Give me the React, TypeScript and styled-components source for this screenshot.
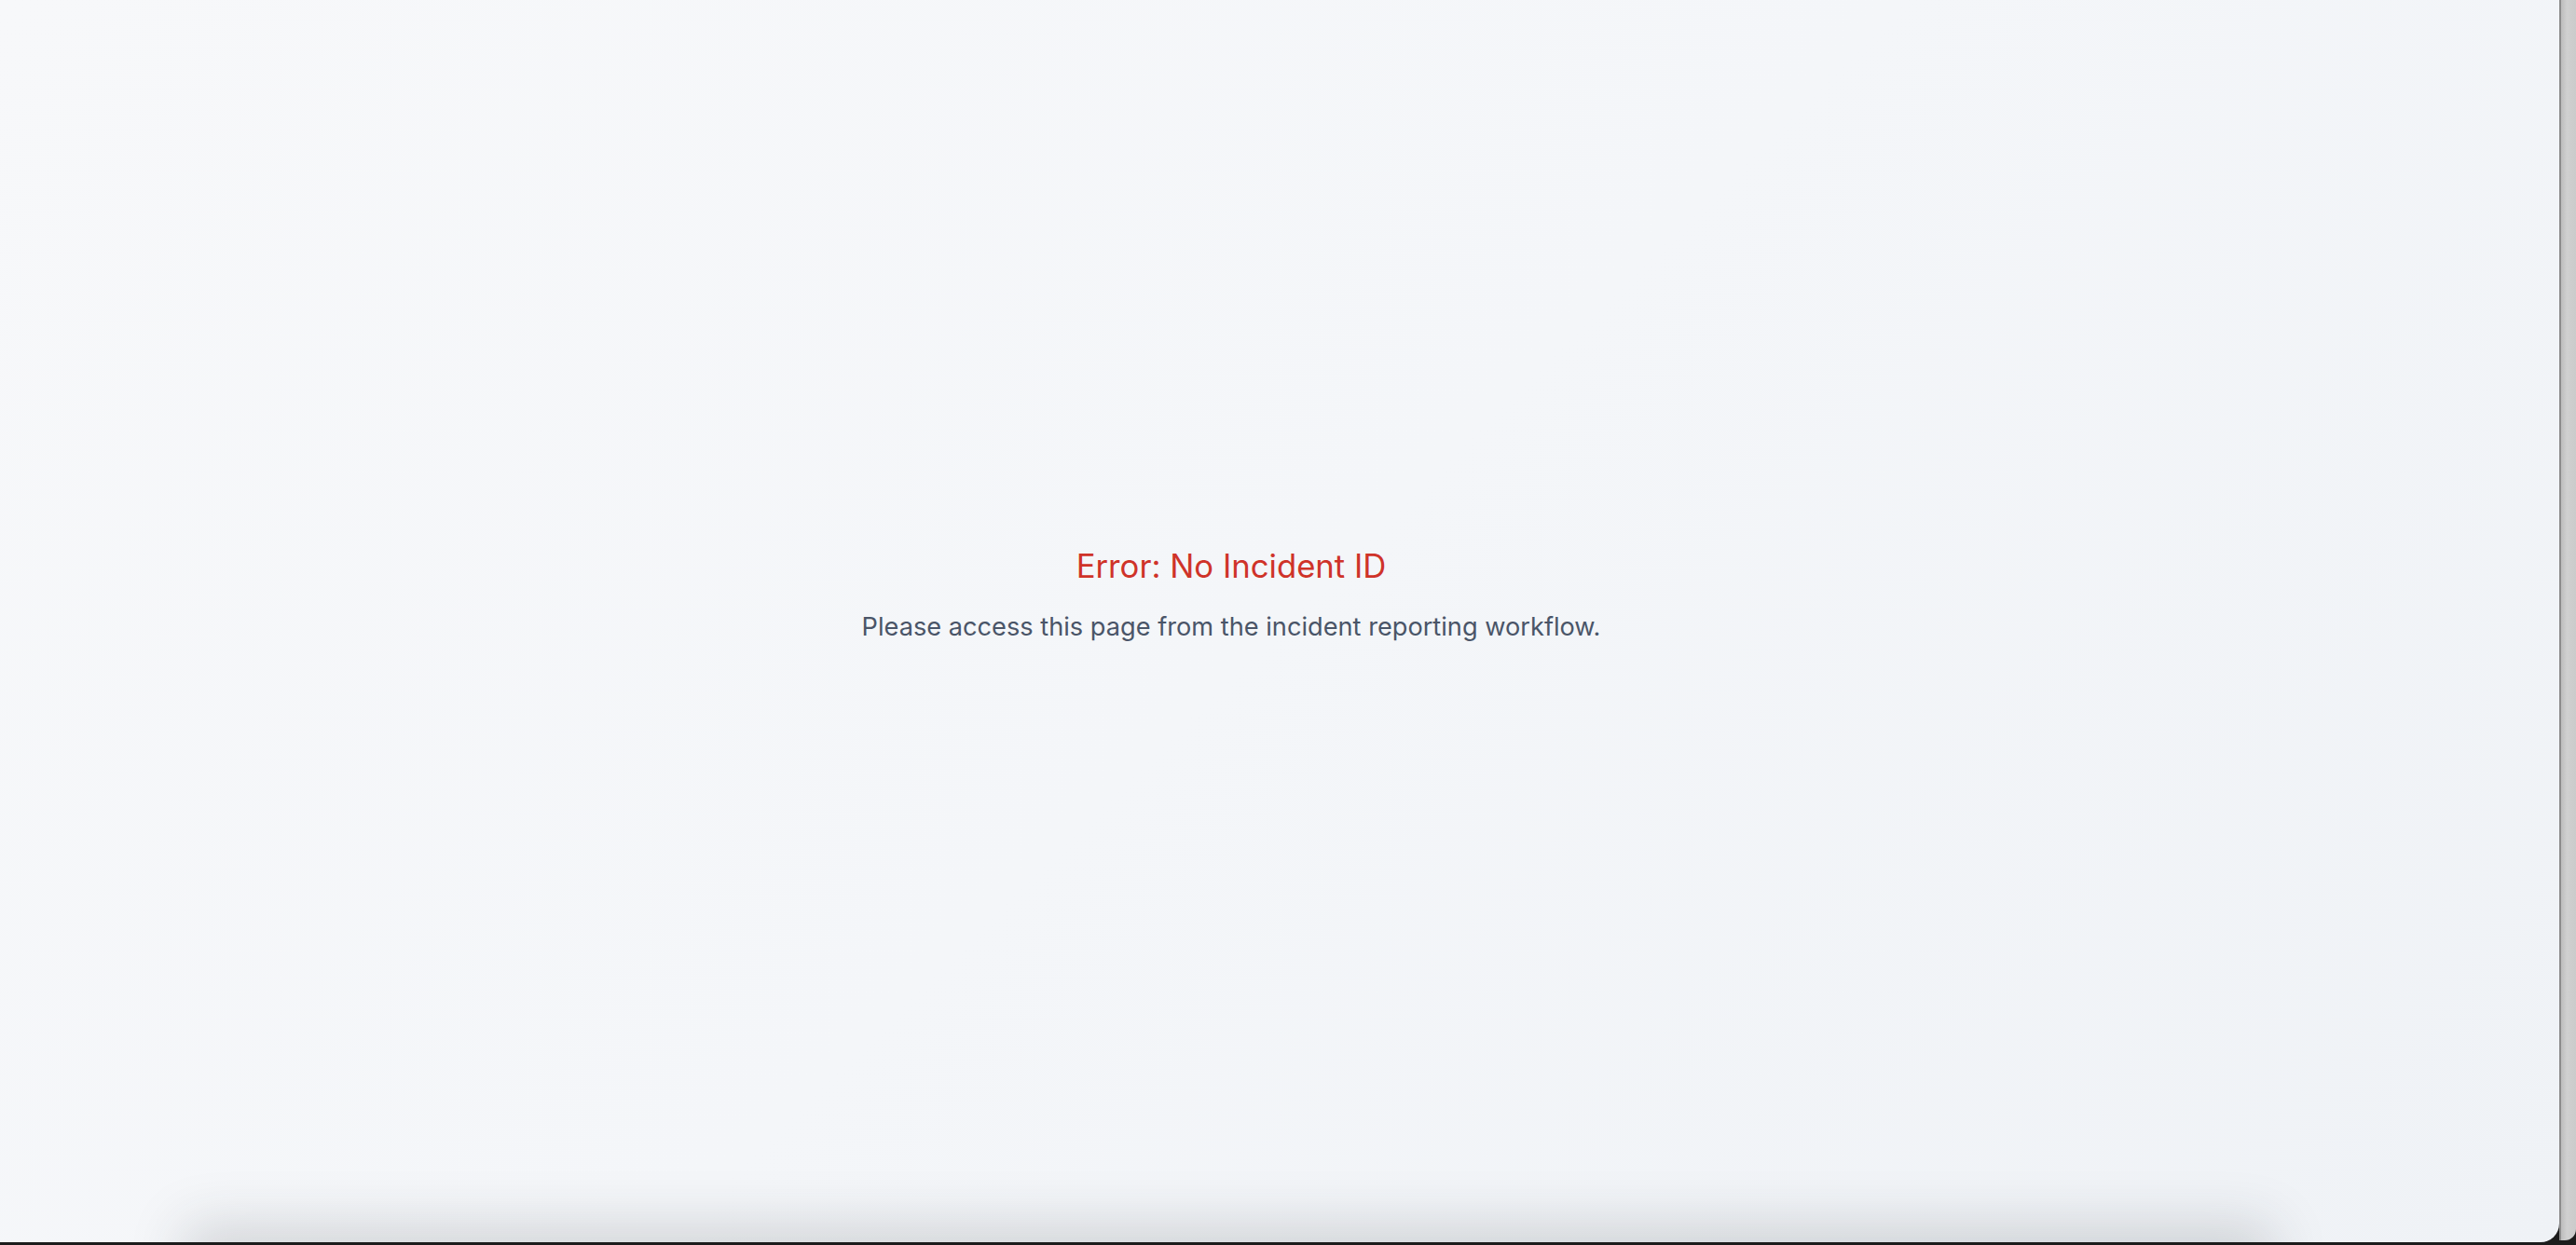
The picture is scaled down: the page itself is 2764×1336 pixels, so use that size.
import React from "react";
import styled, { createGlobalStyle } from "styled-components";

const Global = createGlobalStyle`
  html, body { margin: 0; padding: 0; height: 100%; }
  body { background: #1c1c1c; font-family: Inter, "Noto Sans", sans-serif; }
  #root { height: 100%; }
`;

const Screen = styled.div`
  display: flex;
  align-items: flex-start;
  width: 2764px;
  height: 1336px;
  overflow: hidden;
`;

const Window = styled.main`
  position: relative;
  width: 2746px;
  height: 1333px;
  flex: none;
  border-bottom-right-radius: 20px;
  overflow: hidden;
  background: linear-gradient(135deg, #f7f8fa 0%, #f4f6f9 50%, #eff2f6 100%);
  display: flex;
  align-items: center;
  justify-content: center;
  &::after {
    content: "";
    position: absolute;
    left: 210px;
    right: 320px;
    top: 100%;
    height: 60px;
    box-shadow: 0 -6px 60px 12px rgba(40, 45, 55, 0.17);
  }
`;

const SideStrip = styled.div`
  width: 18px;
  height: 1331px;
  flex: none;
  border-left: 2px solid #8c8c8c;
  box-sizing: border-box;
  background: linear-gradient(90deg, #bdbdbd 0%, #d0d0d0 40%, #cbcbcb 100%);
  border-bottom-right-radius: 12px;
`;

const Message = styled.section`
  display: flex;
  flex-direction: column;
  align-items: center;
  gap: 23px;
  margin-left: -104px;
  margin-top: -56px;
`;

const Title = styled.h2`
  margin: 0;
  color: #cf3329;
  font-family: Inter, "Noto Sans", sans-serif;
  font-weight: 400;
  font-size: 34.7px;
  line-height: 46px;
`;

const Subtitle = styled.p`
  margin: 0;
  color: #4a5568;
  font-family: Inter, "Noto Sans", sans-serif;
  font-weight: 400;
  font-size: 27.2px;
  line-height: 40px;
`;

export default function App() {
  return (
    <>
      <Global />
      <Screen>
        <Window>
          <Message>
            <Title>Error: No Incident ID</Title>
            <Subtitle>Please access this page from the incident reporting workflow.</Subtitle>
          </Message>
        </Window>
        <SideStrip />
      </Screen>
    </>
  );
}
